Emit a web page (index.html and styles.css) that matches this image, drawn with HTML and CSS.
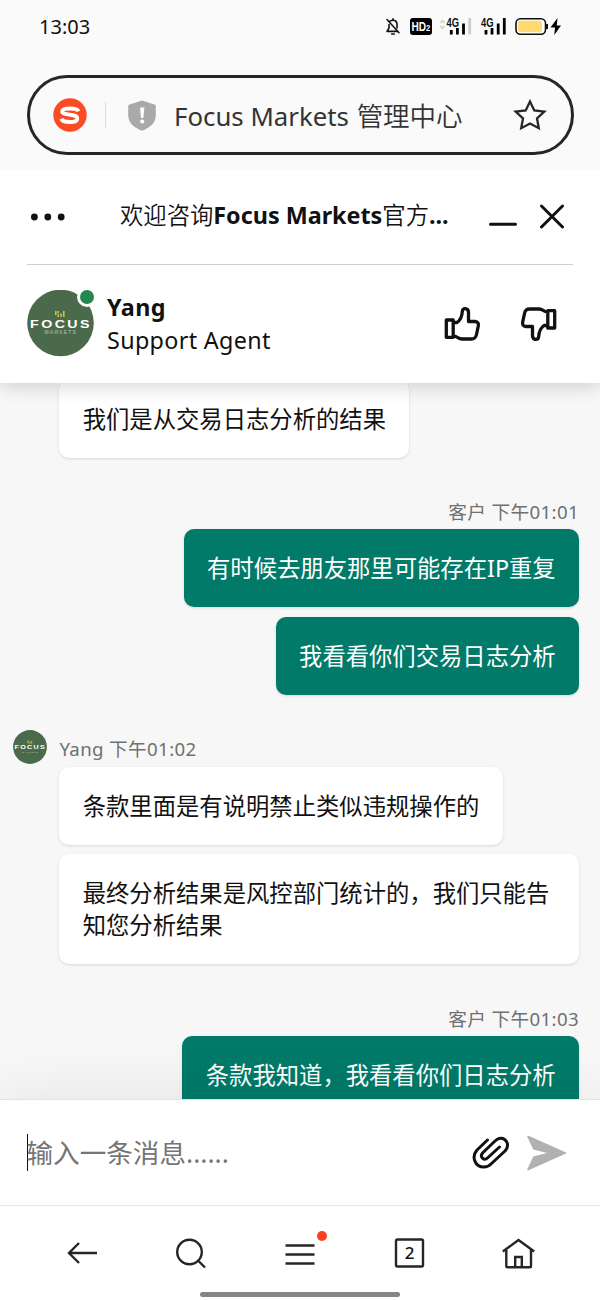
FILE: index.html
```html
<!DOCTYPE html>
<html lang="zh-CN">
<head>
<meta charset="utf-8">
<title>Focus Markets 管理中心</title>
<link rel="stylesheet" href="styles.css">
</head>
<body>
<div class="phone">
  <header class="browser">
    <div class="status">
      <span class="time">13:03</span>
      <svg class="status-icons" width="180" height="24" viewBox="0 0 180 24">
        <g fill="none" stroke="#111" stroke-width="1.6" stroke-linecap="round" stroke-linejoin="round">
          <path d="M10 7.2C11 6.500 12 6.200 13 6.200C15.800 6.200 17 8.200 17 10.500V14M9 10.500V14L7 17.400H17M13 6V4.800M11.700 20H14.300M7 5.500L19 18.700"/>
        </g>
        <rect x="30" y="4" width="22" height="17" rx="3" fill="#000"/>
        <text class="hd" x="31.500" y="16.800" textLength="18.800" lengthAdjust="spacingAndGlyphs">HD<tspan class="hd-sub">2</tspan></text>
        <path d="M60.500 9L62.500 6.500L64.500 9M60.500 12L62.500 14.500L64.500 12" fill="none" stroke="#ccc" stroke-width="1.300"/>
        <text class="net" x="66.500" y="12.800" textLength="12.500" lengthAdjust="spacingAndGlyphs">4G</text>
        <path d="M71.300 16V20.500M77.400 14V20.500M83.500 9.500V20.500" stroke="#000" stroke-width="2.800"/>
        <path d="M89.700 4V20.500" stroke="#ccc" stroke-width="2.800"/>
        <text class="net" x="101" y="12.800" textLength="12.500" lengthAdjust="spacingAndGlyphs">4G</text>
        <path d="M106 16V20.500M112 14V20.500M118.200 9.500V20.500M124.300 4V20.500" stroke="#000" stroke-width="2.800"/>
        <rect x="136" y="4.700" width="29.500" height="15.600" rx="4.500" fill="#fff" stroke="#111" stroke-width="1.600"/>
        <rect x="138" y="6.700" width="24" height="11.600" rx="2.800" fill="#ffda72"/>
        <path d="M167 10V15" stroke="#111" stroke-width="2"/>
        <path d="M177.500 4L170.500 13.500H175L174.300 21L181 11.500H176.800Z" fill="#000"/>
      </svg>
    </div>
    <div class="address">
      <svg class="sogou" width="34" height="34" viewBox="0 0 34 34"><circle cx="17" cy="17" r="16.700" fill="#fb4b22"/><path d="M25.300 13.300C24.500 11 21.500 10.500 17 10.500C12 10.500 9.300 11 9.300 13.500C9.300 18 24.200 15.200 24.200 20.500C24.200 23.500 21 24 17 24C12.500 24 9.300 23.500 8.300 20.800" fill="none" stroke="#fff" stroke-width="4"/></svg>
      <i class="sep"></i>
      <svg class="shield" width="28" height="31" viewBox="0 0 28 31"><path d="M14 .4L26.500 4.500Q27.800 5 27.800 6.500V15C27.800 23 22 27.500 14 30.700C6 27.500.2 23 .2 15V6.500Q.2 5 1.500 4.500Z" fill="#a9a9a9"/><path d="M12 7.500H16.400L15.400 18H13Z" fill="#fff"/><circle cx="14.200" cy="21.500" r="2" fill="#fff"/></svg>
      <span class="url">Focus Markets <b class="url-cn">管理中心</b></span>
      <svg class="star" width="34" height="32" viewBox="0 0 34 32"><path d="M17 2.500L21.300 11.500L31.300 12.700L24 19.500L25.800 29.200L17 24.500L8.200 29.200L10 19.500L2.700 12.700L12.700 11.500Z" fill="none" stroke="#262626" stroke-width="2.300"/></svg>
    </div>
  </header>

  <section class="chat-head">
    <div class="title-row">
      <svg class="dots" width="36" height="8" viewBox="0 0 36 8" fill="#111"><circle cx="4.400" cy="4" r="3.400"/><circle cx="17.800" cy="4" r="3.400"/><circle cx="31.200" cy="4" r="3.400"/></svg>
      <h1 class="title"><span class="thin">欢迎咨询</span>Focus Markets<span class="thin">官方</span>...</h1>
      <svg class="window-icons" width="80" height="30" viewBox="0 0 80 30" fill="none" stroke="#111" stroke-width="3" stroke-linecap="round"><path d="M4.500 23.300H29.500M55.500 5L76.500 26M76.500 5L55.500 26"/></svg>
    </div>
    <div class="agent">
      <div class="avatar-wrap">
        <svg width="67" height="67" viewBox="0 0 67 67"><circle cx="33.500" cy="33" r="33.300" fill="#4b6a4b"/><path d="M28.800 21V25M31.200 21V23.500M31.200 24.500V27M34 23.500V27M36.800 21V27" stroke="#dcc34c" stroke-width="1.500"/><text class="logo" x="3" y="37.500" textLength="62" lengthAdjust="spacingAndGlyphs">FOCUS</text><text class="logo-sub" x="17.500" y="44" textLength="32.500" lengthAdjust="spacingAndGlyphs">MARKETS</text></svg>
        <i class="online"></i>
      </div>
      <div class="who"><div class="name">Yang</div><div class="role">Support Agent</div></div>
      <svg class="thumb" width="38" height="38" viewBox="0 0 38 38" fill="none" stroke="#111" stroke-width="3.300" stroke-linejoin="round"><path d="M3.300 15H10.200V32.300H3.300ZM10.200 17.500H14C17.500 15 19 12 19.300 6.500C19.600 2.500 25 2.500 25.500 7V16.500H32C35 16.800 35.800 18.500 35.300 21L33.500 29.500C32.700 33 31.500 34 28.500 34H19C15 34 14 31 10.200 30.800"/></svg>
      <svg class="thumb down" width="38" height="38" viewBox="0 0 38 38" fill="none" stroke="#111" stroke-width="3.300" stroke-linejoin="round"><path d="M3.300 15H10.200V32.300H3.300ZM10.200 17.500H14C17.500 15 19 12 19.300 6.500C19.600 2.500 25 2.500 25.500 7V16.500H32C35 16.800 35.800 18.500 35.300 21L33.500 29.500C32.700 33 31.500 34 28.500 34H19C15 34 14 31 10.200 30.800"/></svg>
    </div>
  </section>

  <main class="chat">
    <div class="group first"><p class="bubble">我们是从交易日志分析的结果</p></div>
    <div class="group mine">
      <div class="meta">客户 下午01:01</div>
      <p class="bubble">有时候去朋友那里可能存在IP重复</p>
      <p class="bubble">我看看你们交易日志分析</p>
    </div>
    <div class="group">
      <svg class="mini" width="34" height="34" viewBox="0 0 67 67"><circle cx="33.500" cy="33.500" r="33.300" fill="#4b6a4b"/><path d="M28.800 21V25M31.200 21V27M34 23.500V27M36.800 21V27" stroke="#dcc34c" stroke-width="1.500"/><text class="logo" x="3" y="38" textLength="62" lengthAdjust="spacingAndGlyphs">FOCUS</text><text class="logo-sub" x="17.500" y="44.500" textLength="32.500" lengthAdjust="spacingAndGlyphs">MARKETS</text></svg>
      <div class="meta">Yang 下午01:02</div>
      <p class="bubble">条款里面是有说明禁止类似违规操作的</p>
      <p class="bubble">最终分析结果是风控部门统计的，我们只能告知您分析结果</p>
    </div>
    <div class="group mine">
      <div class="meta">客户 下午01:03</div>
      <p class="bubble">条款我知道，我看看你们日志分析</p>
    </div>
  </main>

  <section class="composer">
    <i class="caret"></i>
    <span class="placeholder">输入一条消息......</span>
    <svg class="clip" width="38" height="34" viewBox="0 0 38 34" fill="none" stroke="#111" stroke-width="3" stroke-linecap="round" stroke-linejoin="round"><path d="M15.500 4L5 14C-1 21 3 31 12 31C15 31 17 30 19 28L33 15C39 8 33 1 27 2.500C25 3 24 4 22.500 5.500L11 16.500C7 21 12 25.500 16 21.500L27.500 11"/></svg>
    <svg class="send" width="40" height="36" viewBox="0 0 40 36"><path d="M1.500.8L39 17.400Q40 18 39 18.600L1.500 35.200Q0 35.700.3 34.200L6.300 21.500L20 18L6.300 14.500L.3 1.800Q0 .3 1.500.8Z" fill="#b1b1b1"/></svg>
  </section>

  <nav class="nav">
    <svg viewBox="0 0 40 40"><path d="M36 20H8M18 10L8 20L18 30" /></svg>
    <svg viewBox="0 0 40 40"><circle cx="18.500" cy="19" r="12.300"/><path d="M27 27.500L34 34.500"/></svg>
    <div class="menu"><svg viewBox="0 0 40 40"><path d="M5.500 12.500H34.500M5.500 21.500H34.500M5.500 30.500H34.500"/></svg><i class="alert"></i></div>
    <svg viewBox="0 0 40 40"><rect x="6" y="6.500" width="27" height="27" rx="1.500"/><text class="tabs" x="19.500" y="26" text-anchor="middle">2</text></svg>
    <svg viewBox="0 0 40 40"><path d="M3.800 18.500L19.500 7L35.200 18.500M7.300 17V33Q7.300 34.300 8.600 34.300H30.700Q32 34.300 32 33V17M16.200 34V24H22.800V34"/></svg>
  </nav>
  <div class="home-area"><i class="home-bar"></i></div>
</div>
</body>
</html>
```
FILE: styles.css
```css
* { box-sizing: border-box; }
body { margin: 0; }
body, h1, p { font-family: "Noto Sans", "Noto Sans CJK SC", sans-serif; margin: 0; }
i { display: block; }
svg { flex: none; display: block; }

.phone { width: 600px; height: 1300px; display: flex; flex-direction: column; background: #fff; overflow: hidden; color: #111; }

.browser { height: 170px; flex: none; background: #fafafa; position: relative; z-index: 3; }
.status { height: 75px; padding: 15px 32px 0 39px; display: flex; justify-content: space-between; align-items: flex-start; }
.time { font-size: 20px; line-height: 24px; }
.status-icons { margin-right: 8px; margin-left: auto; overflow: visible; margin-top: -1px; }
.hd { font: bold 12px "Liberation Sans", sans-serif; fill: #fff; }
.hd-sub { font-size: 9px; }
.net { font: bold 12px "Liberation Sans", sans-serif; fill: #111; }

.address { height: 80px; margin: 0 26.500px; border: 3px solid #262626; border-radius: 40px; display: flex; align-items: center; padding: 0 23.500px; }
.sep { width: 1px; height: 26px; background: #dcdcdc; margin-left: 18px; }
.shield { margin-left: 22px; }
.url { margin-left: 18px; flex: 1; font-size: 25.800px; line-height: 36px; color: #333; white-space: nowrap; padding-top: 2px; }
.url-cn { font-weight: 350; font-size: 26.500px; margin-left: 1px; }

.chat-head { height: 213px; flex: none; padding: 0 27px; position: relative; z-index: 2; background: #fff; box-shadow: 0 3px 18px rgba(0, 0, 0, .17); }
.title-row { height: 95px; border-bottom: 1.500px solid #cfcfcf; display: flex; align-items: center; }
.dots { margin-left: 3px; }
.title { margin-left: 54px; width: 332px; font-size: 23.330px; line-height: 34px; font-weight: 700; white-space: nowrap; padding-bottom: 4px; }
.thin { font-weight: 350; }
.window-icons { margin-left: 34px; margin-top: -2px; }
.agent { display: flex; padding-top: 25px; align-items: flex-start; }
.avatar-wrap { position: relative; width: 67px; height: 67px; }
.online { position: absolute; width: 20px; height: 20px; right: -3px; top: -3px; border: 3px solid #fff; border-radius: 50%; background: #268750; }
.logo { font: bold 11.500px "Liberation Sans", sans-serif; fill: #fff; letter-spacing: 2px; }
.logo-sub { font: 4.500px "Liberation Sans", sans-serif; fill: #b5c2b0; letter-spacing: 1px; }
.who { margin-left: 13px; width: 336px; font-size: 23.330px; line-height: 33px; padding-top: 1px; }
.name { font-weight: 700; letter-spacing: .4px; }
.role { letter-spacing: .33px; }
.thumb { margin-top: 15px; }
.down { margin-left: 39px; transform: rotate(180deg); }

.chat { flex: 1; min-height: 0; background: #f7f7f7; overflow: hidden; display: flex; flex-direction: column; gap: 41.500px; padding: 0 21px 0 59.400px; }
.group { display: flex; flex-direction: column; align-items: flex-start; gap: 9.700px; position: relative; flex: none; }
.first { margin-top: -3.500px; }
.mine { align-items: flex-end; }
.meta { height: 20.500px; line-height: 26px; font-size: 18.670px; letter-spacing: .35px; color: #707070; white-space: nowrap; }
.bubble { background: #fff; border-radius: 10px; padding: 23px 23.330px; font-size: 23.330px; line-height: 32px; box-shadow: 0 1px 3px rgba(0, 0, 0, .13); }
.mine .bubble { background: #017a69; color: #fff; }
.mini { position: absolute; left: -46.500px; top: -6px; }

.composer { flex: none; height: 107px; border-top: 1.500px solid #e3e3e3; border-bottom: 1px solid #e6e6e6; background: #fff; display: flex; align-items: center; padding: 0 33px 0 26.500px; position: relative; z-index: 2; box-shadow: 0 -3px 60px rgba(0, 0, 0, .08); }
.caret { width: 1.500px; height: 37px; background: #111; margin-right: -1.500px; }
.placeholder { flex: 1; font-size: 26.600px; line-height: 38px; color: #757575; padding-top: 1px; }
.send { margin-left: 17px; }

.nav { flex: none; height: 84px; padding: 27px 61px 0; display: flex; justify-content: space-between; background: #fff; position: relative; z-index: 3; }
.nav svg { width: 40px; height: 40px; fill: none; stroke: #262626; stroke-width: 2.400; }
.menu { position: relative; }
.alert { position: absolute; width: 10px; height: 10px; border-radius: 50%; background: #fb4020; left: 36.500px; top: -2.500px; }
.nav .tabs { font: 500 17px "Noto Sans", sans-serif; fill: #111; stroke: none; }
.home-area { flex: none; height: 10px; padding-top: 1.500px; position: relative; z-index: 3; background: #fff; }
.home-bar { width: 200px; height: 5px; border-radius: 3px; background: #858585; margin: 0 auto; }
```
